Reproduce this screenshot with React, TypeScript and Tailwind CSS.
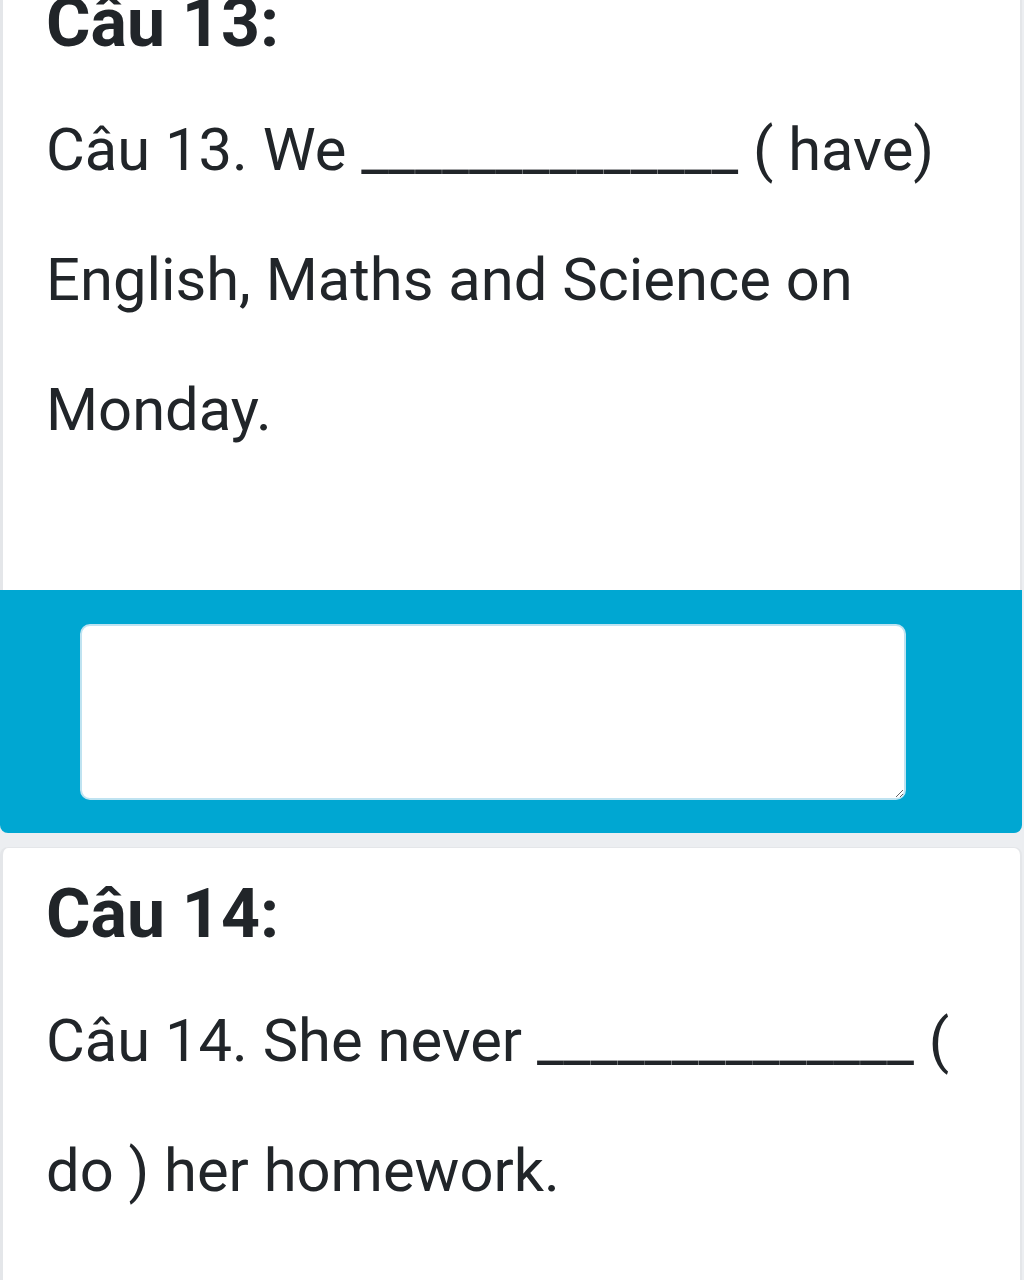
export default function App() {
  return (
    <div
      className="w-[1024px] h-[1280px] overflow-hidden bg-[#eceef1] text-[#212529]"
      style={{ fontFamily: "Roboto, 'Noto Sans', sans-serif" }}
    >
      {/* question 13 card, scrolled so its top is cut off */}
      <div className="-mt-[44px] mr-[2px] rounded-lg border-l-[3px] border-r-[2px] border-[#e4e6e9] bg-white">
        <div className="pt-[25px] pb-[115px] pl-[43px] pr-[48px]">
          <h3 className="text-[68px] leading-[84px] font-bold">Câu 13:</h3>
          <p className="mt-[20px] text-[59.7px] leading-[130px]">
            Câu 13. We ______________ ( have) English, Maths and Science on Monday.
          </p>
        </div>
        <div className="-ml-[3px] -mr-[2px] rounded-b-lg bg-[#00a7d2] pt-[34px] pb-[33px] pl-[80px]">
          <textarea className="block w-[826px] h-[176px] rounded-[10px] border-2 border-[#bfe3f1] bg-white outline-none" />
        </div>
      </div>

      {/* question 14 card */}
      <div className="mt-[14px] mr-[2px] rounded-t-lg border-l-[3px] border-r-[2px] border-t border-[#e4e6e9] bg-white h-[600px]">
        <div className="pt-[24px] pl-[43px] pr-[48px]">
          <h3 className="text-[68px] leading-[84px] font-bold">Câu 14:</h3>
          <p className="mt-[20px] text-[59.7px] leading-[130px]">
            Câu 14. She never ______________ ( do ) her homework.
          </p>
        </div>
      </div>
    </div>
  );
}
